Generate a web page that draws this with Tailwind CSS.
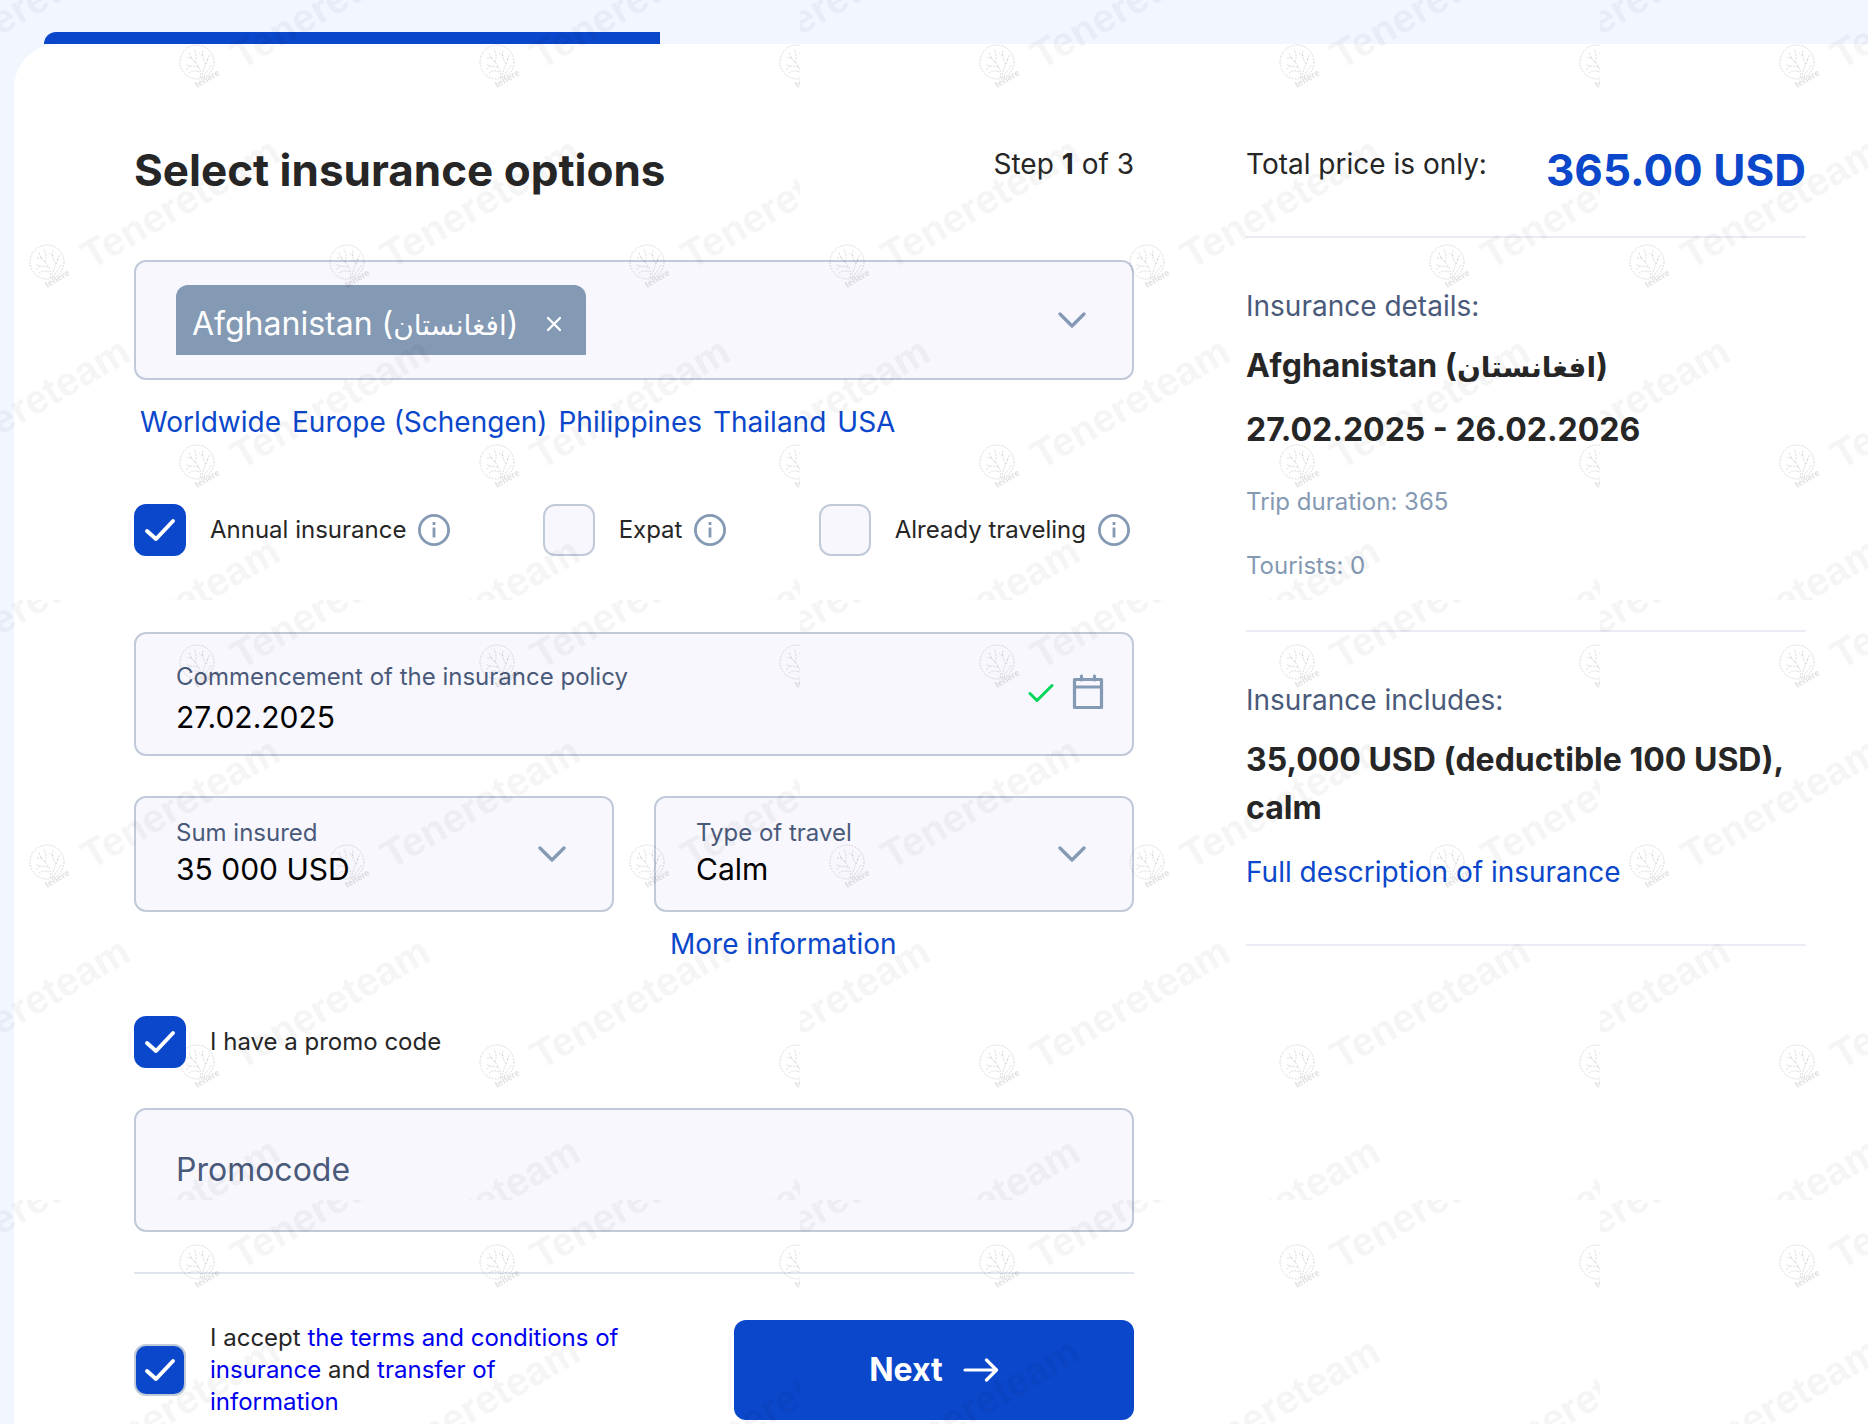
<!DOCTYPE html>
<html lang="en">
<head>
<meta charset="utf-8">
<meta name="viewport" content="width=device-width, initial-scale=1">
<title>Select insurance options</title>
<script src="https://cdn.jsdelivr.net/npm/@tailwindcss/browser@4"></script>
</head>
<body class="relative flex min-h-screen flex-col overflow-x-hidden bg-[#f1f6ff] pt-8 font-['Inter','Noto_Sans','DejaVu_Sans',sans-serif] text-[#262626]">

<!-- Wizard progress -->
<div class="ml-11 h-3 w-[33%] shrink-0 rounded-tl-xl bg-[#0a47cb]"></div>

<div class="ml-[14px] grid grow grid-cols-[25fr_14fr] items-start gap-28 rounded-tl-[44px] bg-white pt-[98px] pr-[62px] pl-[120px]">

  <main>
    <form>
      <header class="flex h-14 items-start justify-between">
        <h1 class="text-[44px] leading-[56px] font-bold">Select insurance options</h1>
        <p class="text-[28px] leading-[44px]">Step <b>1</b> of 3</p>
      </header>

      <!-- Country -->
      <div class="mt-[62px] flex h-30 items-center justify-between rounded-xl border-2 border-[#c0cad9] bg-[#f8f7fd] pr-11 pl-10">
        <span class="flex h-[70px] items-center rounded-t-xl bg-[#8499b3] pt-2 pr-6 pl-4 text-[32px] text-white">
          <span>Afghanistan (<span lang="fa" class="text-[28px]">افغانستان</span>)</span>
          <button type="button" aria-label="Remove Afghanistan" class="ml-7">
            <svg class="size-4" viewBox="0 0 16 16" fill="none" stroke="currentColor" stroke-width="2.4" stroke-linecap="round"><path d="M2 2l12 12M14 2L2 14"/></svg>
          </button>
        </span>
        <button type="button" aria-label="Choose countries" class="text-[#8499b3]">
          <svg class="h-4 w-8" viewBox="0 0 32 16" fill="none" stroke="currentColor" stroke-width="3.2" stroke-linecap="round" stroke-linejoin="round"><path d="M4 2l12 12L28 2"/></svg>
        </button>
      </div>
      <nav class="mt-[22px] flex gap-[11px] pl-[6px] text-[28px] leading-10 text-[#0a47cb]">
        <a href="#">Worldwide</a>
        <a href="#">Europe (Schengen)</a>
        <a href="#">Philippines</a>
        <a href="#">Thailand</a>
        <a href="#">USA</a>
      </nav>

      <!-- Trip options -->
      <div class="mt-[62px] flex justify-between pr-1 text-2xl">
        <div class="flex items-center">
          <span class="grid place-items-center">
            <input id="annual" type="checkbox" checked class="peer col-start-1 row-start-1 size-13 appearance-none rounded-xl border-2 border-[#c0cad9] bg-[#f8f7fd] checked:border-[#0a47cb] checked:bg-[#0a47cb]">
            <svg class="pointer-events-none invisible col-start-1 row-start-1 h-6 w-8 text-white peer-checked:visible" viewBox="0 0 32 24" fill="none" stroke="currentColor" stroke-width="4" stroke-linecap="round" stroke-linejoin="round"><path d="M3 13l9 8L29 3"/></svg>
          </span>
          <label for="annual" class="ml-6">Annual insurance</label>
          <button type="button" aria-label="About annual insurance" class="ml-3 text-[#8499b3]">
            <svg class="size-8" viewBox="0 0 32 32" fill="none" stroke="currentColor" stroke-width="2.8"><circle cx="16" cy="16" r="14.6"/><path d="M16 13.5v10M16 8v3"/></svg>
          </button>
        </div>
        <div class="flex items-center">
          <input id="expat" type="checkbox" class="size-13 appearance-none rounded-xl border-2 border-[#c0cad9] bg-[#f8f7fd] checked:bg-[#0a47cb]">
          <label for="expat" class="ml-6">Expat</label>
          <button type="button" aria-label="About expat insurance" class="ml-3 text-[#8499b3]">
            <svg class="size-8" viewBox="0 0 32 32" fill="none" stroke="currentColor" stroke-width="2.8"><circle cx="16" cy="16" r="14.6"/><path d="M16 13.5v10M16 8v3"/></svg>
          </button>
        </div>
        <div class="flex items-center">
          <input id="traveling" type="checkbox" class="size-13 appearance-none rounded-xl border-2 border-[#c0cad9] bg-[#f8f7fd] checked:bg-[#0a47cb]">
          <label for="traveling" class="ml-6">Already traveling</label>
          <button type="button" aria-label="About insurance while traveling" class="ml-3 text-[#8499b3]">
            <svg class="size-8" viewBox="0 0 32 32" fill="none" stroke="currentColor" stroke-width="2.8"><circle cx="16" cy="16" r="14.6"/><path d="M16 13.5v10M16 8v3"/></svg>
          </button>
        </div>
      </div>

      <!-- Start date -->
      <div class="mt-19 flex h-31 items-center rounded-xl border-2 border-[#c0cad9] bg-[#f8f7fd] pr-7 pl-10">
        <div class="flex grow flex-col pt-1.5">
          <label for="start" class="text-2xl leading-10 text-[#4a5a7a]">Commencement of the insurance policy</label>
          <input id="start" type="text" value="27.02.2025" class="h-10 w-full bg-transparent text-[30px] leading-10 text-black outline-none">
        </div>
        <div class="flex shrink-0 items-center gap-4 pb-1">
          <svg class="h-5 w-7 text-[#00d659]" viewBox="0 0 28 20" fill="none" stroke="currentColor" stroke-width="3" stroke-linecap="round" stroke-linejoin="round"><path d="M2 11.500l7 7L24 3.500"/></svg>
          <button type="button" aria-label="Open calendar" class="text-[#8499b3]">
            <svg class="h-9 w-8" viewBox="0 0 32 36" fill="none" stroke="currentColor" stroke-width="3.2" stroke-linecap="round" stroke-linejoin="round"><path d="M2.500 5.500h27v28h-27zM2.500 13h27M9.500 2v4M22.500 2v4"/></svg>
          </button>
        </div>
      </div>

      <!-- Cover -->
      <div class="mt-10 grid grid-cols-2 gap-10">
        <div class="flex h-29 items-center rounded-xl border-2 border-[#c0cad9] bg-[#f8f7fd] pr-11 pl-10">
          <div class="flex grow flex-col pb-0.5">
            <label for="sum" class="text-2xl leading-8 text-[#4a5a7a]">Sum insured</label>
            <select id="sum" class="h-10 w-full appearance-none bg-transparent text-[30px] leading-10 text-black outline-none"><option>35 000 USD</option></select>
          </div>
          <svg class="pointer-events-none h-4 w-8 shrink-0 text-[#8499b3]" viewBox="0 0 32 16" fill="none" stroke="currentColor" stroke-width="3.2" stroke-linecap="round" stroke-linejoin="round"><path d="M4 2l12 12L28 2"/></svg>
        </div>
        <div class="flex h-29 items-center rounded-xl border-2 border-[#c0cad9] bg-[#f8f7fd] pr-11 pl-10">
          <div class="flex grow flex-col pb-0.5">
            <label for="travel" class="text-2xl leading-8 text-[#4a5a7a]">Type of travel</label>
            <select id="travel" class="h-10 w-full appearance-none bg-transparent text-[30px] leading-10 text-black outline-none"><option>Calm</option></select>
          </div>
          <svg class="pointer-events-none h-4 w-8 shrink-0 text-[#8499b3]" viewBox="0 0 32 16" fill="none" stroke="currentColor" stroke-width="3.2" stroke-linecap="round" stroke-linejoin="round"><path d="M4 2l12 12L28 2"/></svg>
        </div>
      </div>
      <div class="mt-3 grid grid-cols-2 gap-10 text-[28px] leading-10">
        <a href="#" class="col-start-2 justify-self-start pl-4 text-[#0a47cb]">More information</a>
      </div>

      <!-- Promo code -->
      <div class="mt-13 flex items-center text-2xl">
        <span class="grid place-items-center">
          <input id="has-promo" type="checkbox" checked class="peer col-start-1 row-start-1 size-13 appearance-none rounded-xl border-2 border-[#c0cad9] bg-[#f8f7fd] checked:border-[#0a47cb] checked:bg-[#0a47cb]">
          <svg class="pointer-events-none invisible col-start-1 row-start-1 h-6 w-8 text-white peer-checked:visible" viewBox="0 0 32 24" fill="none" stroke="currentColor" stroke-width="4" stroke-linecap="round" stroke-linejoin="round"><path d="M3 13l9 8L29 3"/></svg>
        </span>
        <label for="has-promo" class="ml-6">I have a promo code</label>
      </div>
      <input type="text" aria-label="Promocode" placeholder="Promocode" class="mt-10 block h-31 w-full rounded-xl border-2 border-[#c0cad9] bg-[#f8f7fd] px-10 pb-0.5 text-[32px] outline-none placeholder:text-[#4a5a7a]">

      <!-- Consent and submit -->
      <div class="mt-10 flex items-center justify-between border-t-2 border-[#dfe4ef] pt-[46px]">
        <div class="flex items-center text-2xl">
          <span class="grid place-items-center">
            <input id="terms" type="checkbox" checked class="peer col-start-1 row-start-1 size-13 appearance-none rounded-xl border-2 border-[#c0cad9] bg-[#f8f7fd] checked:bg-[#0a47cb]">
            <svg class="pointer-events-none invisible col-start-1 row-start-1 h-6 w-8 text-white peer-checked:visible" viewBox="0 0 32 24" fill="none" stroke="currentColor" stroke-width="4" stroke-linecap="round" stroke-linejoin="round"><path d="M3 13l9 8L29 3"/></svg>
          </span>
          <label for="terms" class="ml-6 w-[416px] leading-8">I accept <a href="#" class="text-[#0000ee]">the terms and conditions of insurance</a> and <a href="#" class="text-[#0000ee]">transfer of information</a></label>
        </div>
        <button type="submit" class="flex h-25 w-2/5 items-center justify-center gap-5 rounded-xl bg-[#0a47cb] text-[32px] font-bold text-white">
          Next
          <svg class="h-6 w-9" viewBox="0 0 36 24" fill="none" stroke="currentColor" stroke-width="3.2" stroke-linecap="round" stroke-linejoin="round"><path d="M2 12h31M23.500 2L33.500 12l-10 10"/></svg>
        </button>
      </div>
    </form>
  </main>

  <!-- Order summary -->
  <aside>
    <div class="flex h-24 items-start justify-between border-b-2 border-[#e9ebf5]">
      <p class="text-[28px] leading-[44px]">Total price is only:</p>
      <p class="text-[44px] leading-[56px] font-bold text-[#0a47cb]">365.00 USD</p>
    </div>
    <section class="border-b-2 border-[#e9ebf5] py-12">
      <h2 class="text-[28px] leading-10 text-[#4a5a7a]">Insurance details:</h2>
      <p class="mt-4 text-[32px] leading-12 font-bold">Afghanistan (<span lang="fa" class="text-[28px] leading-none">افغانستان</span>)</p>
      <p class="mt-4 text-[32px] leading-12 font-bold">27.02.2025 - 26.02.2026</p>
      <p class="mt-8 text-2xl text-[#8499b3]">Trip duration: 365</p>
      <p class="mt-8 text-2xl text-[#8499b3]">Tourists: 0</p>
    </section>
    <section class="border-b-2 border-[#e9ebf5] pt-12 pb-[52px]">
      <h2 class="text-[28px] leading-10 text-[#4a5a7a]">Insurance includes:</h2>
      <p class="mt-4 text-[32px] leading-12 font-bold">35,000 USD (deductible 100 USD), calm</p>
      <a href="#" class="mt-5 block text-[28px] leading-10 text-[#0a47cb]">Full description of insurance</a>
    </section>
  </aside>
</div>

<!-- Repeating watermark -->
<svg class="pointer-events-none absolute inset-0 h-full w-full" aria-hidden="true">
  <defs>
    <g id="mark">
      <g fill="none" stroke="#000" stroke-opacity=".13" stroke-width="1" stroke-dasharray="2 1">
        <circle r="17"/>
        <path d="M3 16C5 8 1 4-2 0M5 16C6 6 9 3 11-3M7 15C9 9 13 7 14 3M1 5C-4 4-7 5-11 2M-2 0C-5-2-7-6-8-10M-2 0C0-5-1-9-3-13M9 2C6-2 5-7 6-12M10-2L13-8M-7 4L-11 8M2 10C-2 8-5 9-8 11M6-6L2-9M-5-4L-11-4"/>
      </g>
      <text x="0" y="26" transform="rotate(-30 0 26)" fill="#000" fill-opacity=".13" font-family="Liberation Sans" font-weight="700" font-size="9">tenere</text>
      <text x="44" y="8" transform="rotate(-30 44 8)" fill="#000" fill-opacity=".04" font-family="Liberation Sans" font-weight="700" font-size="40">Tenereteam</text>
    </g>
    <pattern id="lattice" width="300" height="400" patternUnits="userSpaceOnUse">
      <use href="#mark" x="197" y="62"/><use href="#mark" x="-103" y="62"/>
      <use href="#mark" x="197" y="462"/><use href="#mark" x="-103" y="462"/>
      <use href="#mark" x="47" y="262"/>
    </pattern>
    <pattern id="sheet" width="800" height="600" patternUnits="userSpaceOnUse">
      <rect width="800" height="600" fill="url(#lattice)"/>
    </pattern>
  </defs>
  <rect width="100%" height="100%" fill="url(#sheet)"/>
</svg>
</body>
</html>
